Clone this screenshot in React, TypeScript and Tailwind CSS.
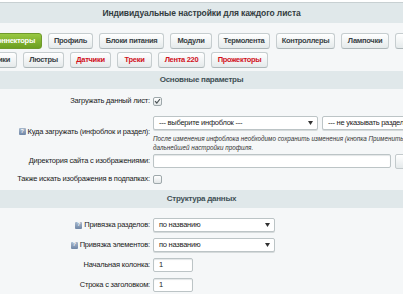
import { ReactNode } from "react";

function Tab({
  label,
  className,
  red,
  active,
}: {
  label: string;
  className: string;
  red?: boolean;
  active?: boolean;
}) {
  return (
    <div
      className={
        "h-[16px] shrink-0 rounded-[3px] border flex items-center whitespace-nowrap overflow-hidden text-[7.5px] tracking-[-0.3px] font-bold " +
        (active
          ? "bg-linear-to-b from-[#98c842] to-[#6c9f1f] border-[#6f9a2c] text-white "
          : "bg-linear-to-b from-white to-[#e5eaeb] border-[#c6cdcf] border-b-[#aeb7b9] " +
            (red ? "text-[#d1111c] " : "text-[#394245] ")) +
        className
      }
    >
      {label}
    </div>
  );
}

function Heading({ children }: { children: ReactNode }) {
  return (
    <div className="h-[18px] bg-[#e0e8ea] flex items-center justify-center text-[8px] tracking-[-0.25px] font-bold text-[#3f5055]">
      {children}
    </div>
  );
}

function Help() {
  return (
    <span className="inline-flex w-[7px] h-[7px] shrink-0 items-center justify-center rounded-[1px] bg-linear-to-b from-[#a9b9cc] to-[#6f86a6] text-white text-[5.5px] leading-none font-bold">
      ?
    </span>
  );
}

function Check({ on }: { on?: boolean }) {
  return (
    <span className="w-[9px] h-[9px] rounded-[2px] border border-[#9ea8ab] bg-linear-to-b from-white to-[#e2e6e7] flex items-center justify-center">
      {on && (
        <svg width="7" height="6" viewBox="0 0 7 6">
          <path d="M1 3.2 L2.8 5 L6 1" fill="none" stroke="#4a5255" strokeWidth="1.2" />
        </svg>
      )}
    </span>
  );
}

function Select({ text, className }: { text: string; className: string }) {
  return (
    <div
      className={
        "h-[14px] shrink-0 bg-white border border-[#bcc4c6] rounded-[2px] shadow-[0_1px_0_#d5dadb] flex items-center justify-between pl-[5px] pr-[4px] text-[7.5px] tracking-[-0.25px] text-[#222] whitespace-nowrap overflow-hidden " +
        className
      }
    >
      <span>{text}</span>
      <svg width="5" height="4" viewBox="0 0 5 4" className="shrink-0">
        <path d="M0 0 H5 L2.5 4 Z" fill="#333" />
      </svg>
    </div>
  );
}

function Input({ value, className }: { value?: string; className: string }) {
  return (
    <div
      className={
        "h-[14px] shrink-0 bg-white border border-[#bcc4c6] rounded-[2px] shadow-[inset_0_1px_1px_#e3e6e7] flex items-center px-[5px] text-[7.5px] text-[#222] " +
        className
      }
    >
      {value}
    </div>
  );
}

function Row({
  label,
  help,
  className,
  labelClass,
  children,
}: {
  label: string;
  help?: boolean;
  className: string;
  labelClass?: string;
  children: ReactNode;
}) {
  return (
    <div className={"flex " + className}>
      <div
        className={
          "w-[150px] shrink-0 flex justify-end text-[7.5px] tracking-[-0.2px] text-[#1a1a1a] whitespace-nowrap " +
          (labelClass ?? "items-center")
        }
      >
        <span className="inline-flex items-center gap-[2px]">
          {help && <Help />}
          {label}
        </span>
      </div>
      <div className="pl-[3px] flex items-center gap-[4px]">{children}</div>
    </div>
  );
}

export default function App() {
  return (
    <div className="w-[403px] h-[294px] overflow-hidden bg-white [font-family:'Liberation_Sans',Arial,sans-serif]">
      <div className="pt-[2px]">
        <div className="border-t border-[#c8d0d2] h-[21px] bg-[#e0e8ea] flex items-center justify-center text-[8.5px] tracking-[-0.1px] font-bold text-[#333c3f]">
          Индивидуальные настройки для каждого листа
        </div>

        <div className="h-[48px] bg-[#f5f7f8] pt-[10px] flex flex-col gap-[3px]">
          <div className="flex gap-[6px]">
            <Tab label="Коннекторы" active className="w-[62px] ml-[-20px] justify-end pr-[6px]" />
            <Tab label="Профиль" className="w-[45px] justify-center" />
            <Tab label="Блоки питания" className="w-[65px] justify-center" />
            <Tab label="Модули" className="w-[42px] justify-center" />
            <Tab label="Термолента" className="w-[52px] justify-center" />
            <Tab label="Контроллеры" className="w-[59px] justify-center" />
            <Tab label="Лампочки" className="w-[48px] justify-center" />
            <Tab label="Кабели" className="w-[50px] justify-end pr-[8px]" />
          </div>
          <div className="flex gap-[6px]">
            <Tab label="Светильники" className="w-[62px] ml-[-45px] justify-end pr-[6px]" />
            <Tab label="Люстры" className="w-[41px] justify-center" />
            <Tab label="Датчики" red className="w-[41px] justify-center" />
            <Tab label="Треки" red className="w-[35px] justify-center" />
            <Tab label="Лента 220" red className="w-[47px] justify-center" />
            <Tab label="Прожекторы" red className="w-[57px] justify-center" />
          </div>
        </div>

        <Heading>Основные параметры</Heading>

        <div className="bg-[#f5f7f8] pt-[2px]">
          <Row label="Загружать данный лист:" className="h-[20px]">
            <Check on />
          </Row>
          <Row label="Куда загружать (инфоблок и раздел):" help className="pt-[5px] pb-[1px]" labelClass="items-start pt-[10px]">
            <div className="flex flex-col">
              <div className="flex gap-[4px]">
                <Select text="--- выберите инфоблок ---" className="w-[165px]" />
                <Select text="--- не указывать раздел ---" className="w-[110px]" />
              </div>
              <div className="mt-[4px] text-[6.3px] italic leading-[9px] text-[#333] whitespace-nowrap">
                После изменения инфоблока необходимо сохранить изменения (кнопка Применить) для возможности
                <br />
                дальнейшей настройки профиля.
              </div>
            </div>
          </Row>
          <Row label="Директория сайта с изображениями:" className="h-[16px]">
            <Input className="w-[238px]" />
            <div className="h-[15px] w-[24px] shrink-0 rounded-[2px] border border-[#c3cacc] bg-linear-to-b from-white to-[#e5eaeb] flex items-center justify-center text-[8px] font-bold text-[#444]">
              ...
            </div>
          </Row>
          <Row label="Также искать изображения в подпапках:" className="h-[20px]">
            <Check />
          </Row>
        </div>

        <div className="h-[1px] bg-[#f5f7f8]" />
        <Heading>Структура данных</Heading>

        <div className="bg-[#f5f7f8] pt-[7px] h-[100px]">
          <Row label="Привязка разделов:" help className="h-[20px]">
            <Select text="по названию" className="w-[122px]" />
          </Row>
          <Row label="Привязка элементов:" help className="h-[20px]">
            <Select text="по названию" className="w-[122px]" />
          </Row>
          <Row label="Начальная колонка:" className="h-[20px]">
            <Input value="1" className="w-[40px]" />
          </Row>
          <Row label="Строка с заголовком:" className="h-[20px]">
            <Input value="1" className="w-[40px]" />
          </Row>
        </div>
      </div>
    </div>
  );
}
